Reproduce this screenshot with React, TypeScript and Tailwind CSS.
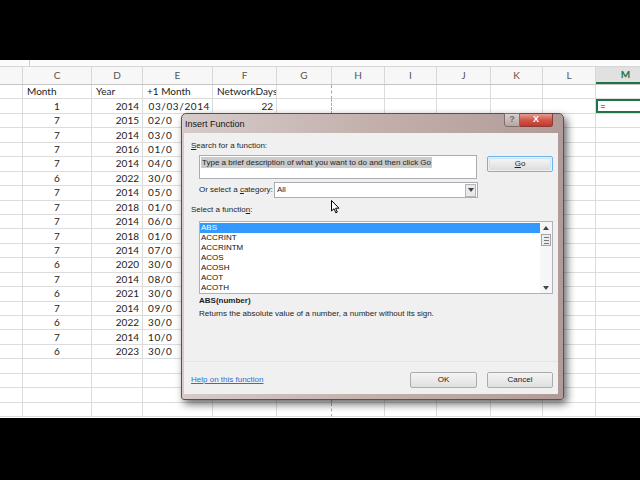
import React from "react";

// Excel sheet behind the Insert Function dialog
const columns = [
  { w: "w-[23px]", label: "" },
  { w: "w-[69px]", label: "C" },
  { w: "w-[51px]", label: "D" },
  { w: "w-[70px]", label: "E" },
  { w: "w-[64px]", label: "F" },
  { w: "w-[55px]", label: "G" },
  { w: "w-[53px]", label: "H" },
  { w: "w-[52px]", label: "I" },
  { w: "w-[54px]", label: "J" },
  { w: "w-[52px]", label: "K" },
  { w: "w-[53px]", label: "L" },
  { w: "w-[60px]", label: "M" },
];

// rows 2+ of column E are cut off by the dialog, only the visible part is kept
const data: string[][] = [
  ["", "Month", "Year", "+1 Month", "NetworkDays"],
  ["", "1", "2014", "03/03/2014", "22"],
  ["", "7", "2015", "02/0", ""],
  ["", "7", "2014", "03/0", ""],
  ["", "7", "2016", "01/0", ""],
  ["", "7", "2014", "04/0", ""],
  ["", "6", "2022", "30/0", ""],
  ["", "7", "2014", "05/0", ""],
  ["", "7", "2018", "01/0", ""],
  ["", "7", "2014", "06/0", ""],
  ["", "7", "2018", "01/0", ""],
  ["", "7", "2014", "07/0", ""],
  ["", "6", "2020", "30/0", ""],
  ["", "7", "2014", "08/0", ""],
  ["", "6", "2021", "30/0", ""],
  ["", "7", "2014", "09/0", ""],
  ["", "6", "2022", "30/0", ""],
  ["", "7", "2014", "10/0", ""],
  ["", "6", "2023", "30/0", ""],
];

const rowCount = 23;

const functions = ["ABS", "ACCRINT", "ACCRINTM", "ACOS", "ACOSH", "ACOT", "ACOTH"];

function cellAlign(row: number, col: number) {
  if (row === 0) return "justify-start pl-[4px]";
  if (col === 1) return "justify-center";
  if (col === 3 && row === 1) return "justify-end pr-[2px] tracking-[0.6px]";
  if (col === 3) return "justify-start pl-[5px] tracking-[0.6px]";
  return "justify-end pr-[3px]";
}

const Sheet = () => (
  <div className="h-[358px] w-[640px] overflow-hidden bg-white font-['Lato',sans-serif] text-[10px] text-[#222]">
    {/* bottom of the formula bar */}
    <div className="h-[7px] flex border-b border-[#d6d6d6] bg-[#fbfbfb]">
      <div className="w-[30px] border-r border-[#cfcfcf]" />
    </div>
    {/* column headers */}
    <div className="h-[18px] flex bg-[#f7f7f7] border-b border-[#c6c6c6]">
      {columns.map((c) => (
        <div
          key={c.label || "B"}
          className={`${c.w} shrink-0 flex items-center justify-center border-r border-[#d8d8d8] ${
            c.label === "M"
              ? "bg-[#e1e1e1] text-[#217346] font-bold border-b-2 border-b-[#217346]"
              : "text-[#555]"
          }`}
        >
          {c.label}
        </div>
      ))}
    </div>
    {/* rows */}
    {Array.from({ length: rowCount }).map((_, r) => (
      <div key={r} className="h-[14.45px] flex">
        {columns.map((c, ci) => {
          const text = data[r]?.[ci] ?? "";
          const selected = r === 1 && c.label === "M";
          return (
            <div
              key={ci}
              className={`${c.w} shrink-0 flex items-center whitespace-nowrap overflow-hidden border-r border-b border-[#dcdcdc] ${cellAlign(
                r,
                ci
              )} ${c.label === "G" ? "[border-right-style:dashed] border-r-[#a8a8a8]" : ""} ${
                selected ? "shadow-[inset_0_0_0_2px_#217346] justify-start pl-[4px]" : ""
              }`}
            >
              {selected ? "=" : text}
            </div>
          );
        })}
      </div>
    ))}
  </div>
);

const Triangle = ({ down }: { down?: boolean }) => (
  <svg width="6" height="4" viewBox="0 0 6 4">
    <path d={down ? "M0 0 L6 0 L3 4 Z" : "M0 4 L6 4 L3 0 Z"} fill="#444" />
  </svg>
);

const Button = ({ children, className = "" }: { children: React.ReactNode; className?: string }) => (
  <div
    className={`h-[16px] flex items-center justify-center rounded-[2px] border border-[#acacac] bg-linear-to-b from-[#f4f4f4] to-[#e0e0e0] text-[8px] text-[#1a1a1a] ${className}`}
  >
    {children}
  </div>
);

const Dialog = () => (
  <div className="absolute left-[181px] top-[113px] w-[383px] h-[287px] flex flex-col rounded-t-[5px] rounded-b-[3px] border border-[#5e4f4d] bg-linear-to-r from-[#d6cbc9] via-[#c3b0ad] to-[#b09b98] pl-[2px] pr-[5px] pb-[5px] shadow-[3px_4px_9px_rgba(0,0,0,0.6)] font-['Liberation_Sans',sans-serif]">
    {/* title bar */}
    <div className="h-[19px] flex items-start">
      <span className="ml-[1px] mt-[5px] text-[9px] leading-[10px] text-[#151515]">Insert Function</span>
      <div className="ml-auto mr-[5px] -mt-px flex">
        <div className="w-[16px] h-[14px] flex items-center justify-center rounded-bl-[3px] border border-[#7d6e6c] bg-linear-to-b from-[#d9cfcd] to-[#b5a6a3] text-[9px] font-bold text-[#6d6a6a]">
          ?
        </div>
        <div className="w-[33px] h-[14px] flex items-center justify-center rounded-br-[3px] border border-l-0 border-[#8a3b33] bg-linear-to-b from-[#e59a90] via-[#d0564a] to-[#c2392c] text-[9px] font-bold text-white">
          X
        </div>
      </div>
    </div>

    {/* client area */}
    <div className="flex-1 flex flex-col bg-[#f0f0f0] text-[8px] text-[#1e1e1e]">
      <div className="mt-[8px] ml-[7px] h-[10px] leading-[10px]">
        <span className="underline">S</span>earch for a function:
      </div>

      <div className="mt-[4px] flex items-start">
        <div className="ml-[15px] w-[278px] h-[24px] border border-[#abadb3] bg-white pl-[1px] pt-[1px]">
          <span className="bg-[#cbcbcb] leading-[11px] inline-block px-px">
            Type a brief description of what you want to do and then click Go
          </span>
        </div>
        <div className="ml-[10px] mt-[1px] w-[66px] h-[16px] rounded-[2px] border border-[#6fb2e8] p-px">
          <div className="h-full flex items-center justify-center bg-linear-to-b from-[#f4f4f4] to-[#e0e0e0] border border-[#c9e4f7]">
            <span className="underline">G</span>o
          </div>
        </div>
      </div>

      <div className="mt-[3px] flex items-center">
        <div className="ml-[15px] w-[75px]">
          Or select a <span className="underline">c</span>ategory:
        </div>
        <div className="w-[204px] h-[16px] flex items-center border border-[#abadb3] bg-white">
          <span className="ml-[2px]">All</span>
          <div className="ml-auto mr-px w-[11px] h-[13px] flex items-center justify-center border border-[#b5b5b5] bg-[#e9e9e9]">
            <Triangle down />
          </div>
        </div>
      </div>

      <div className="mt-[7px] ml-[7px] h-[10px] leading-[10px]">
        Select a functio<span className="underline">n</span>:
      </div>

      <div className="mt-[6px] ml-[15px] w-[354px] h-[73px] flex border border-[#aeb2b8] bg-white">
        <div className="flex-1 flex flex-col pt-px">
          {functions.map((f, i) => (
            <div
              key={f}
              className={`h-[10px] leading-[10px] pl-[1px] ${
                i === 0 ? "bg-[#3399ff] text-white" : "text-[#111]"
              }`}
            >
              {f}
            </div>
          ))}
        </div>
        <div className="w-[12px] flex flex-col items-center bg-[#f6f6f6]">
          <div className="h-[11px] flex items-center justify-center">
            <Triangle />
          </div>
          <div className="mt-px w-[10px] h-[12px] flex flex-col items-center justify-center gap-[2px] border border-[#a6a6a6] bg-[#ececec]">
            <div className="w-[5px] h-px bg-[#777]" />
            <div className="w-[5px] h-px bg-[#777]" />
            <div className="w-[5px] h-px bg-[#777]" />
          </div>
          <div className="flex-1" />
          <div className="h-[11px] flex items-center justify-center">
            <Triangle down />
          </div>
        </div>
      </div>

      <div className="mt-[2px] ml-[15px] h-[10px] leading-[10px] font-bold">ABS(number)</div>
      <div className="mt-[3px] ml-[15px] h-[10px] leading-[10px]">
        Returns the absolute value of a number, a number without its sign.
      </div>

      <div className="mt-[42px] border-t border-[#e4e4e4]" />

      <div className="mt-[10px] flex items-center">
        <span className="ml-[7px] text-[#2f6fd0] underline">Help on this function</span>
        <Button className="ml-auto w-[67px]">OK</Button>
        <Button className="ml-[10px] mr-[5px] w-[66px]">Cancel</Button>
      </div>
    </div>
  </div>
);

const Cursor = () => (
  <svg className="absolute left-[331px] top-[200px]" width="9" height="14" viewBox="0 0 9 14">
    <path d="M0.5 0.5 L0.5 11 L3 8.7 L4.8 12.8 L6.3 12.1 L4.6 8.2 L8 8.2 Z" fill="#fff" stroke="#000" strokeWidth="1" strokeLinejoin="round" />
  </svg>
);

export default function App() {
  return (
    <div className="relative w-[640px] h-[480px] bg-black overflow-hidden">
      <div className="h-[60px]" />
      <Sheet />
      <Dialog />
      <Cursor />
    </div>
  );
}
